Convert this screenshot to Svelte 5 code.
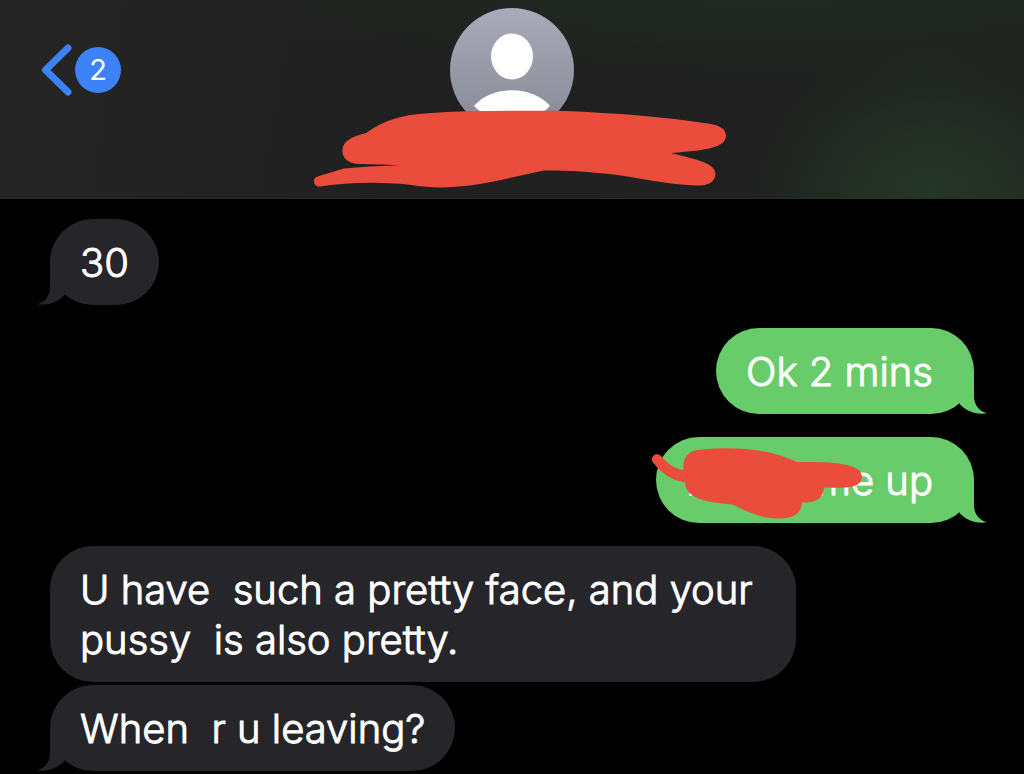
<script>
  const messages = [
    { text: '30', side: 'received', tail: true },
    { text: 'Ok 2 mins', side: 'sent', tail: true },
    { text: 'me up', side: 'sent', tail: true, covered: true },
    { text: 'U have  such a pretty face, and your pussy  is also pretty.', side: 'received', tail: false },
    { text: 'When  r u leaving?', side: 'received', tail: true },
  ];
</script>

<div class="app">
  <header>
    <button class="back" aria-label="Back, 2 unread">
      <svg class="chevron" viewBox="0 0 32 54" aria-hidden="true">
        <path d="M28 5 L5.500 27 L28 49" />
      </svg>
      <span class="badge">2</span>
    </button>
    <div class="contact">
      <svg class="avatar" viewBox="0 0 124 124" aria-hidden="true">
        <defs>
          <linearGradient id="disc" x1="0" y1="0" x2="0" y2="1">
            <stop offset="0" stop-color="#a9abbb" />
            <stop offset="1" stop-color="#868893" />
          </linearGradient>
        </defs>
        <circle cx="62" cy="62" r="62" fill="url(#disc)" />
        <ellipse cx="62" cy="48.500" rx="21" ry="23" fill="#fff" />
        <path d="M24 98 C42 77 82 77 100 98 C80 119 44 119 24 98Z" fill="#fff" />
      </svg>
      <svg class="name-cover" viewBox="298 110 428 78" aria-hidden="true">
        <path
          d="M342.500 150 C343 141 351 137 366 133 C384 120 402 115 425 113.500 C470 110 520 111 565 111 C615 113 665 117 708 123.500 C719 125 726 129 726 136 C725 147 710 150 671 153 C698 160 715 163 715.500 174 C715 183 707 186 695 185.500 C665 184 640 178 610 174 C580 171 560 170 544 170.500 C515 176 480 187 440 187.500 C420 187 408 184 395 183.500 C365 182 345 183 320 186.500 C316 187 314 184 314 181 C314 178 316 177 319 176 L344 168.500 C360 167 380 166 400 165.300 C385 164.500 370 164.500 358 164 C348 163 342 158 342.500 150Z"
        />
      </svg>
    </div>
  </header>

  <main>
    {#each messages as m}
      <div class="bubble {m.side}" class:last={m.tail} class:covered={m.covered}>
        <p>{m.text}</p>
        {#if m.tail}
          <svg class="tail" viewBox="0 0 30 43" aria-hidden="true">
            <path d="M14 0 V25 C14 34 9 40 1 42.300 C12 44 22 40 28.500 33 L30 0Z" />
          </svg>
        {/if}
        {#if m.covered}
          <svg class="scribble" viewBox="651 437 213 86" aria-hidden="true">
            <rect x="689" y="493" width="3" height="3" fill="#fff" />
            <path
              d="M652 461 C651 455 657 452 661 456 C668 464 675 469 683.500 470 C682 457 689 450 702 449.500 C740 446 772 450 797 462 C822 462 862 461 862 477 C861 489 845 488 824 487.500 C823 500 814 503 802 502.500 C801 515 792 519 775 518.500 C755 517 743 509 732 504.500 C704 502 686 498 685 482.500 C670 480 660 472 652 461Z"
            />
          </svg>
        {/if}
      </div>
    {/each}
  </main>
</div>

<style>
  :global(body) {
    margin: 0;
    background: #000;
  }

  .app {
    font-family: Inter, "Liberation Sans", sans-serif;
    font-weight: 300;
    color: #fff;
  }

  header {
    display: grid;
    grid-template-columns: 1fr auto 1fr;
    align-items: start;
    padding: 8px 40px 10px;
    border-bottom: 1px solid #292b2a;
    background:
      radial-gradient(ellipse 190px 170px at 91% 105%, #253827, transparent),
      radial-gradient(ellipse 560px 110px at 75% -10%, #202c22, transparent),
      linear-gradient(100deg, #252525, #202020 40%, #202120);
  }

  .back {
    display: flex;
    align-items: center;
    gap: 3px;
    justify-self: start;
    margin: 35px 0 0;
    padding: 0;
    border: 0;
    background: none;
    color: #fff;
    font: inherit;
  }

  .chevron {
    width: 32px;
    height: 54px;
    fill: none;
    stroke: #3d83f7;
    stroke-width: 7;
    stroke-linecap: round;
    stroke-linejoin: round;
  }

  .badge {
    width: 46px;
    border-radius: 23px;
    background: #3d83f7;
    font-size: 29px;
    font-weight: 400;
    line-height: 46px;
    text-align: center;
  }

  .contact {
    display: flex;
    flex-direction: column;
    align-items: center;
  }

  .avatar {
    width: 124px;
    height: 124px;
  }

  .name-cover {
    width: 428px;
    height: 78px;
    margin-top: -22px;
    fill: #eb4d3d;
  }

  main {
    display: flex;
    flex-direction: column;
    align-items: flex-start;
    padding: 20px 50px 2px;
  }

  .bubble {
    position: relative;
    box-sizing: border-box;
    max-width: calc(100% - 178px);
    margin-bottom: 3px;
    padding: 19px 30px 17px;
    border-radius: 43px;
    background: #26252a;
    fill: #26252a;
    font-size: 40px;
    line-height: 50px;
  }

  .last {
    margin-bottom: 23px;
  }

  .last:last-child {
    margin-bottom: 0;
  }

  .sent {
    align-self: flex-end;
    padding-right: 41px;
    background: #68cc6a;
    fill: #68cc6a;
    text-align: right;
  }

  .covered {
    min-width: 318px;
  }

  p {
    margin: 0;
    white-space: pre-wrap;
    -webkit-text-stroke: 1px currentColor;
  }

  .tail {
    position: absolute;
    bottom: 0;
    left: -14px;
    width: 30px;
    height: 43px;
  }

  .sent .tail {
    right: -14px;
    left: auto;
    transform: scaleX(-1);
  }

  .scribble {
    position: absolute;
    top: 0;
    left: -5px;
    width: 213px;
    height: 86px;
    fill: #eb4d3d;
  }
</style>
